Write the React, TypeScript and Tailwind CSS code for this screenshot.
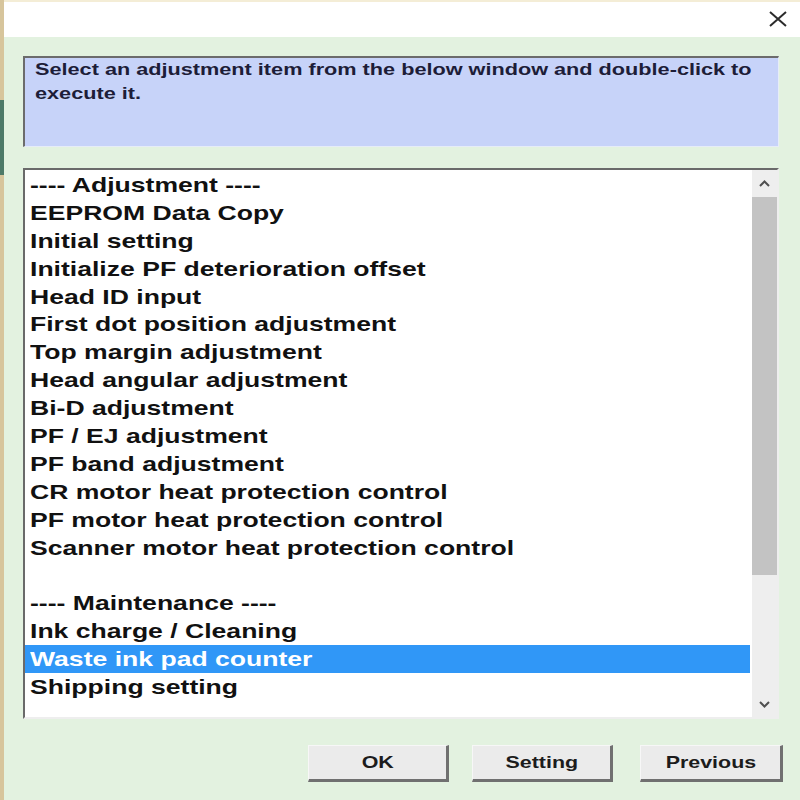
import React from "react";

const items: { text: string; selected?: boolean }[] = [
  { text: "---- Adjustment ----" },
  { text: "EEPROM Data Copy" },
  { text: "Initial setting" },
  { text: "Initialize PF deterioration offset" },
  { text: "Head ID input" },
  { text: "First dot position adjustment" },
  { text: "Top margin adjustment" },
  { text: "Head angular adjustment" },
  { text: "Bi-D adjustment" },
  { text: "PF / EJ adjustment" },
  { text: "PF band adjustment" },
  { text: "CR motor heat protection control" },
  { text: "PF motor heat protection control" },
  { text: "Scanner motor heat protection control" },
  { text: "" },
  { text: "---- Maintenance ----" },
  { text: "Ink charge / Cleaning" },
  { text: "Waste ink pad counter", selected: true },
  { text: "Shipping setting" },
];

function Btn({ label, w }: { label: string; w: string }) {
  return (
    <div
      className={`${w} h-[37px] flex items-center justify-center bg-[#ebebeb] border-t border-l border-[#f7f7f7] border-r-[3px] border-b-[3px] border-r-[#707070] border-b-[#707070]`}
    >
      <span className="inline-block scale-x-[1.26] text-[17px] font-bold text-[#1c1c1c] leading-none">
        {label}
      </span>
    </div>
  );
}

export default function App() {
  return (
    <div className="w-[800px] h-[800px] flex bg-[#e3f2e0] overflow-hidden font-['Liberation_Sans',Arial,sans-serif]">
      {/* left window edge */}
      <div className="w-[4px] flex flex-col bg-[#d7c59c]">
        <div className="h-[100px]" />
        <div className="h-[75px] bg-[#4d7a68]" />
      </div>

      <div className="flex-1 flex flex-col">
        {/* title bar */}
        <div className="h-[37px] bg-white border-t-2 border-[#f4edd6] flex items-center justify-end pr-[13px]">
          <svg width="18" height="16" viewBox="0 0 18 16" className="mt-[-2px]">
            <path d="M1 1 L17 15 M17 1 L1 15" stroke="#2b2b2b" strokeWidth="2" fill="none" />
          </svg>
        </div>

        <div className="flex flex-col pl-[19px] pr-[21px]">
          {/* info box */}
          <div className="mt-[19px] h-[91px] bg-[#c7d3f9] border-t-2 border-l-2 border-[#6c6c6c] border-r border-b border-r-[#e6ecf8] border-b-[#e6ecf8] pl-[10px] pt-0 text-[17px] leading-[24px] font-bold text-[#1d1d38]">
            <div>
              <span className="inline-block origin-left scale-x-[1.275] whitespace-nowrap">
                Select an adjustment item from the below window and double-click to
              </span>
            </div>
            <div>
              <span className="inline-block origin-left scale-x-[1.275] whitespace-nowrap">
                execute it.
              </span>
            </div>
          </div>

          {/* list box */}
          <div className="mt-[21px] h-[551px] flex bg-white border-t-2 border-l-2 border-[#6a6a6a] border-r-2 border-b-2 border-r-[#eeeeee] border-b-[#eeeeee]">
            <div className="w-[725px] pt-[1px] text-[21px] leading-[27.9px] font-bold text-[#111111]">
              {items.map((it, i) => (
                <div
                  key={i}
                  className={`h-[27.9px] pl-[5px] whitespace-nowrap ${
                    it.selected ? "bg-[#3097f7] text-white" : ""
                  }`}
                >
                  <span className="inline-block origin-left scale-x-[1.265]">{it.text}</span>
                </div>
              ))}
            </div>
            <div className="w-[2px]" />
            {/* scrollbar */}
            <div className="w-[25px] flex flex-col bg-[#eeeeee]">
              <div className="h-[27px] flex items-center justify-center">
                <svg width="11" height="7" viewBox="0 0 11 7">
                  <path d="M1 6 L5.5 1.5 L10 6" stroke="#505050" strokeWidth="2" fill="none" />
                </svg>
              </div>
              <div className="h-[378px] bg-[#c3c3c3]" />
              <div className="flex-1" />
              <div className="h-[26px] flex items-center justify-center">
                <svg width="11" height="7" viewBox="0 0 11 7">
                  <path d="M1 1 L5.5 5.5 L10 1" stroke="#505050" strokeWidth="2" fill="none" />
                </svg>
              </div>
            </div>
          </div>
        </div>

        {/* buttons */}
        <div className="mt-[26px] flex justify-end pr-[17px]">
          <Btn label="OK" w="w-[141px]" />
          <div className="w-[23px]" />
          <Btn label="Setting" w="w-[141px]" />
          <div className="w-[27px]" />
          <Btn label="Previous" w="w-[143px]" />
        </div>
      </div>
    </div>
  );
}
